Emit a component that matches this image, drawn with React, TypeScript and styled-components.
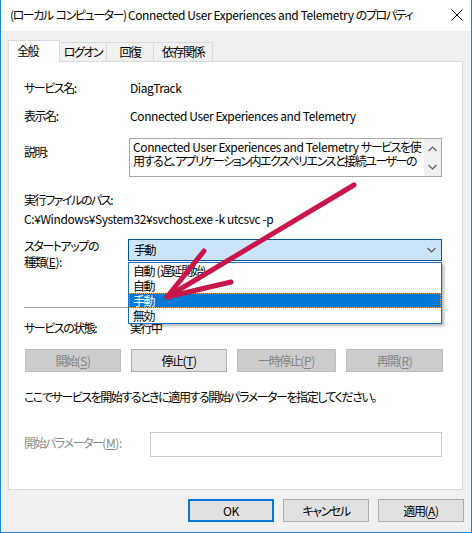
import styled, { createGlobalStyle } from 'styled-components';

const GlobalStyle = createGlobalStyle`
  html, body { margin: 0; padding: 0; background: #ffffff; }
  body {
    font-family: "Noto Sans CJK JP", sans-serif;
    font-size: 12px;
    color: #000;
    font-feature-settings: "palt";
    letter-spacing: -1.45px;
  }
  * { box-sizing: border-box; }
`;

// latin runs are only a little wider than Segoe UI, japanese ones a lot wider than Yu Gothic UI
const Latin = styled.span`
  letter-spacing: -0.4px;
`;

const Space = styled.span`
  display: inline-block;
  width: 3px;
`;

const Key = ({ k }: { k: string }) => (
  <Latin>
    (<u>{k}</u>)
  </Latin>
);

const Window = styled.div`
  position: relative;
  width: 472px;
  height: 533px;
  background: #f0f0f0;
  border: 1px solid #1883d7;
  border-top: none;
  display: flex;
  flex-direction: column;
  overflow: hidden;
`;

const TitleBar = styled.div`
  height: 31px;
  background: #ffffff;
  display: flex;
  align-items: center;
  justify-content: space-between;
  padding: 0 8px 1px 9px;
  line-height: 16px;
  white-space: nowrap;
`;

const Body = styled.div`
  padding: 0 8px 0 7px;
`;

const TabStrip = styled.div`
  display: flex;
  align-items: flex-end;
  height: 21px;
  margin-top: 9px;
  position: relative;
  z-index: 1;
`;

const Tab = styled.div<{ $w: number; $active?: boolean }>`
  width: ${({ $w }) => $w}px;
  height: ${({ $active }) => ($active ? 22 : 19)}px;
  margin-bottom: ${({ $active }) => ($active ? -1 : 0)}px;
  margin-left: ${({ $active }) => ($active ? 0 : -1)}px;
  background: ${({ $active }) => ($active ? '#ffffff' : '#f0f0f0')};
  border: 1px solid #d9d9d9;
  border-bottom: none;
  display: flex;
  align-items: center;
  justify-content: ${({ $active }) => ($active ? 'flex-start' : 'center')};
  padding-left: ${({ $active }) => ($active ? 8 : 0)}px;
  padding-bottom: ${({ $active }) => ($active ? 1 : 0)}px;
  line-height: 16px;
  &:first-child { margin-left: 0; }
`;

const Panel = styled.div`
  height: 429px;
  background: #ffffff;
  border: 1px solid #d9d9d9;
  padding: 0 20px 0 15px;
  line-height: 16px;
`;

const Row = styled.div<{ $mt: number }>`
  display: flex;
  align-items: flex-start;
  margin-top: ${({ $mt }) => $mt}px;
  position: relative;
`;

const Label = styled.div<{ $w?: number; $mt?: number; $muted?: boolean }>`
  width: ${({ $w }) => $w ?? 105}px;
  flex-shrink: 0;
  margin-top: ${({ $mt }) => $mt ?? 0}px;
  color: ${({ $muted }) => ($muted ? '#8a8a8a' : '#000')};
  white-space: nowrap;
`;

const Value = styled.div`
  margin-left: 1px;
  white-space: nowrap;
`;

const TextBlock = styled.div<{ $mt: number }>`
  margin-top: ${({ $mt }) => $mt}px;
  white-space: nowrap;
`;

const DescBox = styled.div`
  flex: 1;
  min-width: 0;
  height: 39px;
  border: 1px solid #a8a8a8;
  display: flex;
  line-height: 14px;
`;

const DescText = styled.div`
  flex: 1;
  min-width: 0;
  padding: 1px 0 0 3px;
  white-space: nowrap;
  overflow: hidden;
`;

const ScrollBar = styled.div`
  width: 17px;
  flex-shrink: 0;
  background: #f0f0f0;
  display: flex;
  flex-direction: column;
  align-items: center;
  justify-content: space-between;
  padding: 7px 0 6px;
`;

const ComboWrap = styled.div`
  flex: 1;
  position: relative;
  margin-left: -1px;
`;

const Combo = styled.div`
  height: 22px;
  background: #cce4f7;
  border: 1px solid #005499;
  display: flex;
  align-items: center;
  justify-content: space-between;
  padding: 0 5px 0 5px;
`;

const DropList = styled.div`
  position: absolute;
  top: 23px;
  left: 0;
  right: 0;
  background: #ffffff;
  border: 1px solid #1b6fc2;
  box-shadow: 2px 2px 3px rgba(0, 0, 0, 0.3);
  z-index: 2;
`;

const DropItem = styled.div<{ $selected?: boolean }>`
  height: 15px;
  line-height: 14px;
  padding-left: 3px;
  background: ${({ $selected }) => ($selected ? '#0078d7' : 'transparent')};
  color: ${({ $selected }) => ($selected ? '#ffffff' : '#000')};
  border: 1px dotted ${({ $selected }) => ($selected ? '#e8a94a' : 'transparent')};
`;

const Separator = styled.div<{ $mt: number }>`
  height: 1px;
  background: #a0a0a0;
  margin-top: ${({ $mt }) => $mt}px;
`;

const ButtonRow = styled.div<{ $mt: number }>`
  display: grid;
  grid-template-columns: 96px 96px 99px 97px;
  gap: 10px;
  margin: ${({ $mt }) => $mt}px 0 0 1px;
`;

const Button = styled.div<{ $disabled?: boolean; $default?: boolean; $w?: number }>`
  height: 23px;
  ${({ $w }) => ($w ? `width: ${$w}px;` : '')}
  background: ${({ $disabled }) => ($disabled ? '#cccccc' : '#e1e1e1')};
  border: ${({ $default, $disabled }) =>
    $default ? '2px solid #0078d7' : $disabled ? '1px solid #bfbfbf' : '1px solid #adadad'};
  color: ${({ $disabled }) => ($disabled ? '#838383' : '#000')};
  display: flex;
  align-items: center;
  justify-content: center;
  white-space: nowrap;
  line-height: 16px;
  u { text-underline-offset: 2px; }
`;

const ParamInput = styled.div`
  flex: 1;
  height: 25px;
  border: 1px solid #cccccc;
  background: #ffffff;
`;

const Footer = styled.div`
  display: flex;
  justify-content: flex-end;
  gap: 9px;
  margin: 9px -1px 0 0;
`;

const Overlay = styled.svg`
  position: absolute;
  left: 0;
  top: 0;
  pointer-events: none;
  z-index: 5;
`;

const Chevron = ({ down = true, color = '#555' }: { down?: boolean; color?: string }) => (
  <svg width="9" height="6" viewBox="0 0 9 6">
    <path
      d={down ? 'M0.5 1 L4.5 5 L8.5 1' : 'M0.5 5 L4.5 1 L8.5 5'}
      fill="none"
      stroke={color}
      strokeWidth="1.2"
    />
  </svg>
);

export default function App() {
  return (
    <>
      <GlobalStyle />
      <Window>
        <TitleBar>
          <span>
            (ローカル<Space />コンピューター)<Latin> Connected User Experiences and Telemetry </Latin>のプロパティ
          </span>
          <svg width="12" height="12" viewBox="0 0 12 12">
            <path d="M0.5 0.5 L11.5 11.5 M11.5 0.5 L0.5 11.5" stroke="#000" strokeWidth="1" />
          </svg>
        </TitleBar>
        <Body>
          <TabStrip>
            <Tab $w={52} $active>全般</Tab>
            <Tab $w={48}>ログオン</Tab>
            <Tab $w={48}>回復</Tab>
            <Tab $w={60}>依存関係</Tab>
          </TabStrip>
          <Panel>
            <Row $mt={18}>
              <Label>サービス名:</Label>
              <Value>
                <Latin>DiagTrack</Latin>
              </Value>
            </Row>
            <Row $mt={12}>
              <Label>表示名:</Label>
              <Value>
                <Latin>Connected User Experiences and Telemetry</Latin>
              </Value>
            </Row>
            <Row $mt={14}>
              <Label $mt={6}>説明:</Label>
              <DescBox>
                <DescText>
                  <Latin>Connected User Experiences and Telemetry </Latin>サービスを使
                  <br />
                  用すると、アプリケーション内エクスペリエンスと接続ユーザーの
                </DescText>
                <ScrollBar>
                  <Chevron down={false} color="#606060" />
                  <Chevron color="#606060" />
                </ScrollBar>
              </DescBox>
            </Row>
            <TextBlock $mt={15}>実行ファイルのパス:</TextBlock>
            <TextBlock $mt={3}>
              <Latin>C:¥Windows¥System32¥svchost.exe -k utcsvc -p</Latin>
            </TextBlock>
            <Row $mt={12}>
              <Label $mt={-1}>
                スタートアップの
                <br />
                種類<Key k="E" />:
              </Label>
              <ComboWrap>
                <Combo>
                  <span>手動</span>
                  <Chevron />
                </Combo>
                <DropList>
                  <DropItem>
                    自動<Latin> (</Latin>遅延開始<Latin>)</Latin>
                  </DropItem>
                  <DropItem>自動</DropItem>
                  <DropItem $selected>手動</DropItem>
                  <DropItem>無効</DropItem>
                </DropList>
              </ComboWrap>
            </Row>
            <Separator $mt={37} />
            <Row $mt={12}>
              <Label>サービスの状態:</Label>
              <Value>実行中</Value>
            </Row>
            <ButtonRow $mt={13}>
              <Button $disabled>
                開始<Key k="S" />
              </Button>
              <Button>
                停止<Key k="T" />
              </Button>
              <Button $disabled>
                一時停止<Key k="P" />
              </Button>
              <Button $disabled>
                再開<Key k="R" />
              </Button>
            </ButtonRow>
            <TextBlock $mt={17}>
              ここでサービスを開始するときに適用する開始パラメーターを指定してください。
            </TextBlock>
            <Row $mt={27}>
              <Label $w={126} $mt={3} $muted>
                開始パラメーター<Key k="M" />:
              </Label>
              <ParamInput />
            </Row>
          </Panel>
          <Footer>
            <Button $default $w={86}>
              <Latin>OK</Latin>
            </Button>
            <Button $w={86}>キャンセル</Button>
            <Button $w={86}>
              適用<Key k="A" />
            </Button>
          </Footer>
        </Body>
        <Overlay width="472" height="533" viewBox="0 0 472 533">
          <g stroke="#c8164b" strokeWidth="5" strokeLinecap="round" fill="none">
            <path d="M353 185 L166 297" />
            <path d="M203 251 L166 297 L230 282" strokeLinejoin="round" />
          </g>
        </Overlay>
      </Window>
    </>
  );
}
